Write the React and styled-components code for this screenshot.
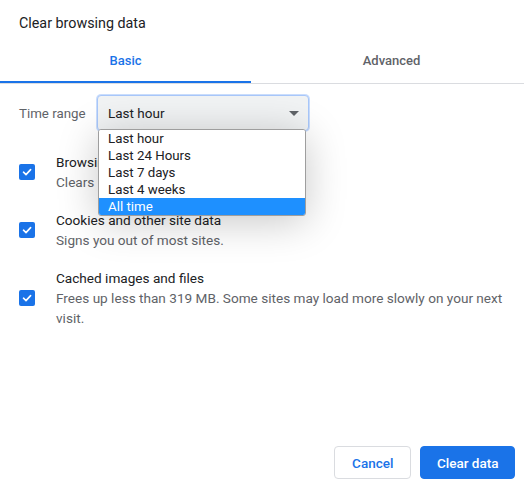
import React, { useState } from 'react';
import styled, { createGlobalStyle } from 'styled-components';

const palette = {
  text: '#202124',
  gray: '#5f6368',
  line: '#dadce0',
  blue: '#1a73e8',
  field: '#f1f3f4',
  pick: '#1e90ff',
};

const GlobalStyle = createGlobalStyle`
  html, body {
    margin: 0;
    padding: 0;
    background: #fff;
  }
  body {
    font-family: Roboto, "Liberation Sans", Arial, sans-serif;
    color: ${palette.text};
    -webkit-font-smoothing: antialiased;
  }
`;

const Dialog = styled.div`
  display: flex;
  flex-direction: column;
  height: 489px;
  width: 524px;
  overflow: hidden;
  background: #fff;
`;

const Title = styled.h1`
  margin: 13px 0 7px 19px;
  font-size: 14.3px;
  font-weight: 400;
  line-height: 20px;
  color: ${palette.text};
`;

const TabStrip = styled.div`
  display: grid;
  grid-template-columns: 251px 1fr;
  border-bottom: 1px solid ${palette.line};
`;

const Tab = styled.div`
  display: flex;
  align-items: center;
  justify-content: center;
  height: 41px;
  padding-left: ${(p) => (p.$shift ? '8px' : '0')};
  border-bottom: 2px solid ${(p) => (p.$active ? palette.blue : 'transparent')};
  font-size: 13px;
  font-weight: 500;
  color: ${(p) => (p.$active ? palette.blue : palette.gray)};
  cursor: pointer;
`;

const Body = styled.div`
  flex: 1;
  padding: 11px 20px 0 19px;
`;

const RangeRow = styled.div`
  display: flex;
  align-items: center;
  margin-bottom: 12px;
`;

const RangeLabel = styled.span`
  width: 78px;
  font-size: 13.3px;
  color: ${palette.gray};
`;

const SelectWrap = styled.div`
  position: relative;
  width: 212px;
`;

const SelectBox = styled.div`
  display: flex;
  align-items: center;
  justify-content: space-between;
  box-sizing: border-box;
  height: 36px;
  padding: 0 8px 0 10px;
  border: 1px solid #a8c7fa;
  border-radius: 4px;
  box-shadow: 0 0 0 1px rgba(138, 180, 248, 0.45);
  background: ${palette.field};
  font-size: 13.5px;
  color: ${palette.text};
`;

const Caret = styled.span`
  width: 0;
  height: 0;
  border-left: 5px solid transparent;
  border-right: 5px solid transparent;
  border-top: 5px solid ${palette.gray};
  margin-right: 1px;
`;

const Menu = styled.ul`
  position: absolute;
  top: 34px;
  left: 1px;
  width: 208px;
  box-sizing: border-box;
  margin: 0;
  padding: 0;
  list-style: none;
  background: #fff;
  border: 1px solid #9e9e9e;
  border-radius: 3px;
  overflow: hidden;
  box-shadow: 0 6px 40px rgba(0, 0, 0, 0.22);
  z-index: 2;
`;

const MenuItem = styled.li`
  height: 17px;
  line-height: 17px;
  padding-left: 9px;
  font-size: 13.3px;
  background: ${(p) => (p.$selected ? palette.pick : '#fff')};
  color: ${(p) => (p.$selected ? '#fff' : palette.text)};
`;

const Option = styled.label`
  display: flex;
  align-items: center;
  padding: 9px 0;
`;

const Box = styled.span`
  display: flex;
  align-items: center;
  justify-content: center;
  flex-shrink: 0;
  width: 16px;
  height: 16px;
  margin-right: 21px;
  border-radius: 2px;
  background: ${palette.blue};
`;

const OptionText = styled.div`
  font-size: 13.6px;
  line-height: 20px;
`;

const OptionTitle = styled.div`
  color: ${palette.text};
`;

const OptionNote = styled.div`
  color: ${palette.gray};
`;

const Footer = styled.div`
  display: flex;
  justify-content: flex-end;
  gap: 9px;
  padding: 0 9px 10px 0;
`;

const Button = styled.button`
  height: 33px;
  padding: 0 ${(p) => (p.$primary ? '15.5px' : '17px')};
  border: 1px solid ${(p) => (p.$primary ? palette.blue : palette.line)};
  border-radius: 4px;
  background: ${(p) => (p.$primary ? palette.blue : '#fff')};
  color: ${(p) => (p.$primary ? '#fff' : palette.blue)};
  font-family: inherit;
  font-size: 13.5px;
  font-weight: 500;
  cursor: pointer;
`;

const Check = () => (
  <svg width='12' height='12' viewBox='0 0 12 12'>
    <polyline
      points='2.5,6.2 5,8.6 9.6,3.6'
      fill='none'
      stroke='#fff'
      strokeWidth='1.6'
      strokeLinecap='round'
      strokeLinejoin='round'
    />
  </svg>
);

const ranges = ['Last hour', 'Last 24 Hours', 'Last 7 days', 'Last 4 weeks', 'All time'];

const options = [
  {
    id: 'history',
    title: 'Browsing history',
    note: 'Clears history from all synced devices',
  },
  {
    id: 'cookies',
    title: 'Cookies and other site data',
    note: 'Signs you out of most sites.',
  },
  {
    id: 'cache',
    title: 'Cached images and files',
    note: 'Frees up less than 319 MB. Some sites may load more slowly on your next visit.',
  },
];

const App = () => {
  const [tab, setTab] = useState('basic');

  return (
    <Dialog>
      <GlobalStyle />
      <Title>Clear browsing data</Title>
      <TabStrip>
        <Tab $active={tab === 'basic'} onClick={() => setTab('basic')}>Basic</Tab>
        <Tab $shift $active={tab === 'advanced'} onClick={() => setTab('advanced')}>Advanced</Tab>
      </TabStrip>
      <Body>
        <RangeRow>
          <RangeLabel>Time range</RangeLabel>
          <SelectWrap>
            <SelectBox>
              Last hour
              <Caret />
            </SelectBox>
            <Menu>
              {ranges.map((r) => (
                <MenuItem key={r} $selected={r === 'All time'}>{r}</MenuItem>
              ))}
            </Menu>
          </SelectWrap>
        </RangeRow>
        {options.map((o) => (
          <Option key={o.id}>
            <Box><Check /></Box>
            <OptionText>
              <OptionTitle>{o.title}</OptionTitle>
              <OptionNote>{o.note}</OptionNote>
            </OptionText>
          </Option>
        ))}
      </Body>
      <Footer>
        <Button>Cancel</Button>
        <Button $primary>Clear data</Button>
      </Footer>
    </Dialog>
  );
};

export default App;
